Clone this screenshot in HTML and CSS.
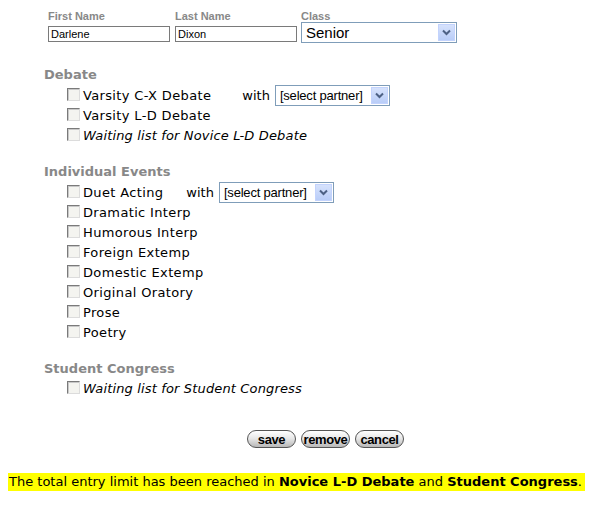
FILE: index.html
```html
<!DOCTYPE html>
<html>
<head>
<meta charset="utf-8">
<link rel="stylesheet" href="styles.css">
</head>
<body>
<div class="names">
  <div class="field">
    <div class="flabel">First Name</div>
    <input class="tinput" type="text" value="Darlene">
  </div>
  <div class="field">
    <div class="flabel">Last Name</div>
    <input class="tinput" type="text" value="Dixon">
  </div>
  <div class="field field-class">
    <div class="flabel flabel-short">Class</div>
    <div class="sel sel-class"><span class="sel-text">Senior</span><span class="sel-btn"><svg width="9" height="7" viewBox="0 0 9 7"><path d="M1 1.5 L4.5 5 L8 1.5" fill="none" stroke="#4d6185" stroke-width="2"/></svg></span></div>
  </div>
</div>

<div class="section">
  <div class="heading">Debate</div>
  <div class="row"><span class="cb"></span><span class="lbl">Varsity C-X Debate</span><span class="with with-a">with</span><div class="sel sel-partner"><span class="sel-text">[select partner]</span><span class="sel-btn"><svg width="9" height="7" viewBox="0 0 9 7"><path d="M1 1.5 L4.5 5 L8 1.5" fill="none" stroke="#4d6185" stroke-width="2"/></svg></span></div></div>
  <div class="row"><span class="cb"></span><span class="lbl">Varsity L-D Debate</span></div>
  <div class="row"><span class="cb"></span><span class="lbl wait">Waiting list for Novice L-D Debate</span></div>
</div>

<div class="section">
  <div class="heading">Individual Events</div>
  <div class="row"><span class="cb"></span><span class="lbl">Duet Acting</span><span class="with with-b">with</span><div class="sel sel-partner"><span class="sel-text">[select partner]</span><span class="sel-btn"><svg width="9" height="7" viewBox="0 0 9 7"><path d="M1 1.5 L4.5 5 L8 1.5" fill="none" stroke="#4d6185" stroke-width="2"/></svg></span></div></div>
  <div class="row"><span class="cb"></span><span class="lbl">Dramatic Interp</span></div>
  <div class="row"><span class="cb"></span><span class="lbl">Humorous Interp</span></div>
  <div class="row"><span class="cb"></span><span class="lbl">Foreign Extemp</span></div>
  <div class="row"><span class="cb"></span><span class="lbl">Domestic Extemp</span></div>
  <div class="row"><span class="cb"></span><span class="lbl">Original Oratory</span></div>
  <div class="row"><span class="cb"></span><span class="lbl">Prose</span></div>
  <div class="row"><span class="cb"></span><span class="lbl">Poetry</span></div>
</div>

<div class="section section-last">
  <div class="heading">Student Congress</div>
  <div class="row"><span class="cb"></span><span class="lbl wait">Waiting list for Student Congress</span></div>
</div>

<div class="buttons">
  <span class="pill">save</span>
  <span class="pill">remove</span>
  <span class="pill">cancel</span>
</div>

<div class="notice">The total entry limit has been reached in <b>Novice L-D Debate</b> and <b>Student Congress</b>.</div>
</body>
</html>
```
FILE: styles.css
```css
body {
  margin: 8px;
  font-family: "DejaVu Sans", Verdana, sans-serif;
  font-size: 13px;
  color: #000;
  background: #fff;
}
.names {
  display: flex;
  margin-left: 40px;
  gap: 5px;
}
.field {
  display: flex;
  flex-direction: column;
}
.field-class {
  margin-left: -1px;
}
.flabel {
  font-family: "Liberation Sans", Arial, sans-serif;
  font-weight: bold;
  font-size: 11px;
  color: #888;
  height: 18px;
  line-height: 16px;
}
.flabel-short {
  height: 14px;
}
.tinput {
  box-sizing: border-box;
  width: 122px;
  height: 16px;
  margin: 0;
  padding: 0 2px;
  border: 1px solid #7a7a7a;
  font-family: "Liberation Sans", Arial, sans-serif;
  font-size: 11px;
  color: #000;
  outline: none;
}
.sel {
  box-sizing: border-box;
  display: flex;
  align-items: stretch;
  height: 21px;
  border: 1px solid #7f9db9;
  background: #fff;
  font-family: "Liberation Sans", Arial, sans-serif;
  color: #000;
}
.sel-text {
  flex: 1;
  display: flex;
  align-items: center;
  padding-left: 4px;
  white-space: nowrap;
}
.sel-btn {
  width: 15px;
  margin: 1px;
  background: linear-gradient(#d6e2fc, #b9cdf8);
  border: 1px solid #c3d3fd;
  display: flex;
  align-items: center;
  justify-content: center;
}
.sel-class {
  width: 156px;
  font-size: 15px;
}
.sel-partner {
  width: 115px;
  font-size: 13px;
  letter-spacing: -0.2px;
}
.section {
  margin-top: 24px;
}
.section + .section {
  margin-top: 19px;
}
.section-last .row {
  margin-top: -1px;
}
.heading {
  margin-left: 36px;
  font-weight: bold;
  color: #888;
  line-height: 16px;
  margin-bottom: 2px;
}
.row {
  display: flex;
  align-items: center;
  height: 20px;
  margin-left: 59px;
}
.cb {
  box-sizing: border-box;
  width: 13px;
  height: 13px;
  border-top: 1px solid #7a7a7a;
  border-left: 1px solid #7a7a7a;
  border-right: 1px solid #dcdcdc;
  border-bottom: 1px solid #dcdcdc;
  background: #f4f4f0;
  box-shadow: inset 1px 1px 0 #c8c8c8;
  margin-right: 3px;
  margin-top: -2px;
}
.lbl {
  letter-spacing: 0.35px;
  white-space: nowrap;
}
.wait {
  font-style: italic;
  letter-spacing: 0.15px;
}
.with {
  margin-right: 5px;
}
.with-a {
  margin-left: 31px;
}
.with-b {
  margin-left: 23px;
}
.buttons {
  display: flex;
  gap: 5px;
  margin-top: 32px;
  margin-left: 239px;
}
.pill {
  box-sizing: border-box;
  width: 49px;
  height: 18px;
  border: 1px solid #555;
  border-radius: 9px;
  background: linear-gradient(#ffffff 0%, #e8e8e8 45%, #b8b8b8 100%);
  font-family: "Liberation Sans", Arial, sans-serif;
  font-weight: bold;
  font-size: 13px;
  display: flex;
  align-items: center;
  justify-content: center;
  letter-spacing: -0.4px;
}
.notice {
  margin-top: 25px;
  margin-left: -1px;
  width: 579px;
  padding-left: 2px;
  box-sizing: border-box;
  background: #ffff00;
  font-size: 13px;
  line-height: 18px;
  white-space: nowrap;
}
```
